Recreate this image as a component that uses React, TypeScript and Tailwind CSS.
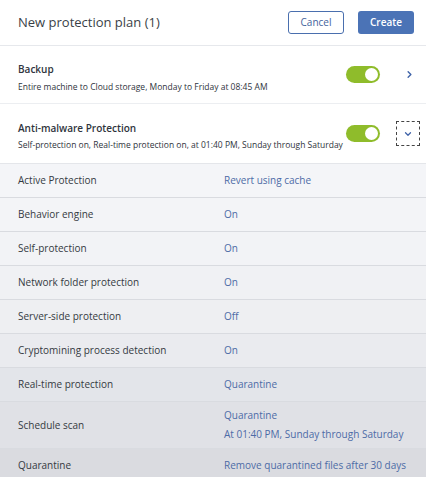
import { ChevronRight, ChevronDown } from "lucide-react";

type Row = { label: string; value: string[]; bg: string; tall?: boolean };

const rows: Row[] = [
  { label: "Active Protection", value: ["Revert using cache"], bg: "bg-[#f4f5f8]" },
  { label: "Behavior engine", value: ["On"], bg: "bg-[#f3f4f7]" },
  { label: "Self-protection", value: ["On"], bg: "bg-[#f2f3f6]" },
  { label: "Network folder protection", value: ["On"], bg: "bg-[#f0f1f4]" },
  { label: "Server-side protection", value: ["Off"], bg: "bg-[#eeeff2]" },
  { label: "Cryptomining process detection", value: ["On"], bg: "bg-[#eaebef]" },
  { label: "Real-time protection", value: ["Quarantine"], bg: "bg-[#e3e5ea]" },
  {
    label: "Schedule scan",
    value: ["Quarantine", "At 01:40 PM, Sunday through Saturday"],
    bg: "bg-[#e0e1e6]",
    tall: true,
  },
  { label: "Quarantine", value: ["Remove quarantined files after 30 days"], bg: "bg-[#dadbe0]" },
];

function Toggle() {
  return (
    <div className="shrink-0 w-[34px] h-[17px] rounded-full bg-[#8fbc2b] flex items-center justify-end pr-[2px]">
      <div className="w-[13px] h-[13px] rounded-full bg-white" />
    </div>
  );
}

export default function App() {
  return (
    <div className="w-[426px] h-[477px] overflow-hidden bg-white text-[#2f343d] font-['Open_Sans',sans-serif]">
      <div className="h-[46px] flex items-center justify-between pl-[18px] pr-[12px] border-b border-[#e6e8ec]">
        <h1 className="text-[13px] text-[#3a3f47]">New protection plan (1)</h1>
        <div className="flex gap-[14px]">
          <button className="w-[56px] h-[23px] rounded-[3px] border border-[#4a6fae] text-[10px] text-[#44639c] bg-white">
            Cancel
          </button>
          <button className="w-[56px] h-[23px] rounded-[3px] bg-[#4b73b6] text-[10px] font-semibold text-white">
            Create
          </button>
        </div>
      </div>

      <div className="h-[58px] flex items-center border-b border-[#eceef1] pl-[18px] pr-[11px]">
        <div className="flex-1 pt-[6px]">
          <div className="text-[10px] font-semibold leading-[16px]">Backup</div>
          <div className="text-[8.5px] leading-[14px] mt-[3px]">
            Entire machine to Cloud storage, Monday to Friday at 08:45 AM
          </div>
        </div>
        <Toggle />
        <div className="shrink-0 ml-[24px]">
          <ChevronRight className="w-[11px] h-[11px] text-[#3f63a8]" strokeWidth={3} />
        </div>
      </div>

      <div className="h-[60px] flex items-center border-b border-[#e4e6ea] pl-[18px] pr-[6px]">
        <div className="flex-1 pt-[4px]">
          <div className="text-[10px] font-semibold leading-[16px]">Anti-malware Protection</div>
          <div className="text-[8.5px] leading-[14px] mt-[2px] whitespace-nowrap">
            Self-protection on, Real-time protection on, at 01:40 PM, Sunday through Saturday
          </div>
        </div>
        <Toggle />
        <div className="shrink-0 ml-[16px] w-[24px] h-[25px] border border-dashed border-[#444] flex items-center justify-center">
          <ChevronDown className="w-[10px] h-[10px] text-[#3f63a8]" strokeWidth={3} />
        </div>
      </div>

      {rows.map((r) => (
        <div
          key={r.label}
          className={`flex items-center border-b border-[#d9dbe0] text-[10px] ${r.bg} ${r.tall ? "h-[47px]" : "h-[34px]"}`}
        >
          <div className="w-[224px] pl-[18px] text-[#353a42]">{r.label}</div>
          <div className="flex flex-col gap-[4px] text-[#4d6ba6]">
            {r.value.map((v) => (
              <div key={v}>{v}</div>
            ))}
          </div>
        </div>
      ))}
    </div>
  );
}
